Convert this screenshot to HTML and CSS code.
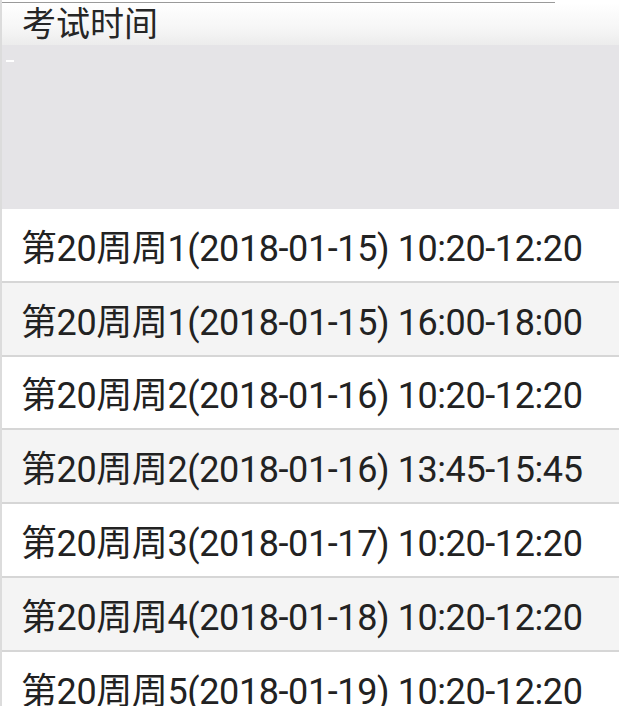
FILE: index.html
```html
<!DOCTYPE html>
<html lang="zh">
<head>
<meta charset="utf-8">
<link rel="stylesheet" href="styles.css">
</head>
<body>
<div class="screen">
  <div class="topline"></div>
  <div class="header"><span class="title">考试时间</span></div>
  <div class="blank"><span class="tick"></span></div>
  <ul class="list">
    <li class="row">第20周周1(2018-01-15) 10:20-12:20</li>
    <li class="row alt">第20周周1(2018-01-15) 16:00-18:00</li>
    <li class="row">第20周周2(2018-01-16) 10:20-12:20</li>
    <li class="row alt">第20周周2(2018-01-16) 13:45-15:45</li>
    <li class="row">第20周周3(2018-01-17) 10:20-12:20</li>
    <li class="row alt">第20周周4(2018-01-18) 10:20-12:20</li>
    <li class="row">第20周周5(2018-01-19) 10:20-12:20</li>
  </ul>
</div>
</body>
</html>
```
FILE: styles.css
```css
html, body {
  margin: 0;
  padding: 0;
  background: #ffffff;
}
.screen {
  width: 619px;
  height: 706px;
  overflow: hidden;
  font-family: Roboto, "Noto Sans CJK SC", sans-serif;
  color: #222222;
  border-left: 2px solid #dcdcdc;
  box-sizing: border-box;
}
.topline {
  height: 2px;
  width: 553px;
  border-bottom: 1px solid #9a9a9a;
  background: #fff;
}
.header {
  height: 42px;
  background: linear-gradient(to bottom, #ffffff 0%, #f6f6f6 60%, #ececec 100%);
  display: flex;
  align-items: center;
  padding-left: 20px;
  box-sizing: border-box;
}
.title {
  font-size: 34px;
  line-height: 36px;
  font-family: "Noto Sans CJK SC", sans-serif;
  color: #262626;
  margin-bottom: 4px;
}
.blank {
  height: 164px;
  background: #e5e4e7;
  position: relative;
}
.tick {
  position: absolute;
  left: 4px;
  top: 15px;
  width: 8px;
  height: 2px;
  background: #ffffff;
}
.list {
  list-style: none;
  margin: 0;
  padding: 0;
}
.row {
  height: 71.8px;
  border-bottom: 2px solid #d6d6d6;
  display: flex;
  align-items: center;
  padding-left: 19px;
  font-size: 36px;
  letter-spacing: -0.4px;
  background: #ffffff;
  white-space: nowrap;
}
.row.alt {
  background: #f4f4f4;
}
```
